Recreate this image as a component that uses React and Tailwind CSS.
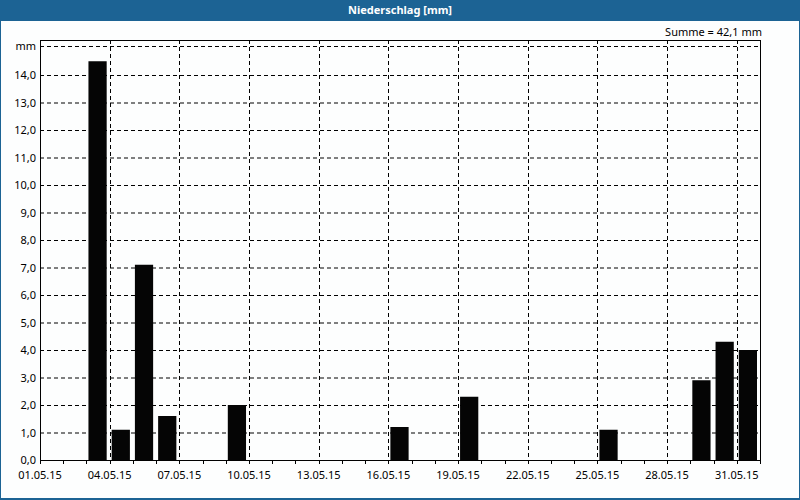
export default function App() {
  const day = 720 / 31;
  const X = (d) => 40 + d * day;
  const Y = (v) => 460 - v * 27.5;
  const bars = { 3: 14.5, 4: 1.1, 5: 7.1, 6: 1.6, 9: 2.0, 16: 1.2, 19: 2.3, 25: 1.1, 29: 2.9, 30: 4.3, 31: 4.0 };
  return (
    <div className="w-[800px] h-[500px] flex flex-col bg-[#1c6394] font-['DejaVu_Sans',sans-serif]">
      <div className="h-[21px] flex items-center justify-center text-white text-[11px] font-bold">
        Niederschlag [mm]
      </div>
      <div className="mx-[1px] mb-[2px] flex-1 bg-[#fdfefe]">
        <svg width="798" height="477" viewBox="1 21 798 477" className="text-[11px]">
          <text x="762" y="36" textAnchor="end" fill="#000">Summe = 42,1 mm</text>
          {Array.from({ length: 15 }, (_, i) => i).map((i) => (
            <g key={i}>
              {i > 0 && <line x1="40" x2="760" y1={Y(i) + 0.5} y2={Y(i) + 0.5} stroke="#000" strokeDasharray="4 3" />}
              <text x="36" y={Y(i) + 4} textAnchor="end">{i.toFixed(1).replace('.', ',')}</text>
            </g>
          ))}
          <line x1="40" x2="760" y1="46.5" y2="46.5" stroke="#000" strokeDasharray="4 3" />
          <text x="36" y="50" textAnchor="end">mm</text>
          {Array.from({ length: 11 }, (_, i) => i * 3).map((d) => (
            <g key={d}>
              {d > 0 && <line x1={Math.round(X(d)) + 0.5} x2={Math.round(X(d)) + 0.5} y1="40" y2="460" stroke="#000" strokeDasharray="4 3" />}
              <text x={X(d)} y="479" textAnchor="middle">{String(d + 1).padStart(2, '0')}.05.15</text>
            </g>
          ))}
          {Array.from({ length: 32 }, (_, d) => (
            <line key={d} x1={Math.round(X(d)) + 0.5} x2={Math.round(X(d)) + 0.5} y1="460" y2="464" stroke="#000" />
          ))}
          {Object.entries(bars).map(([d, v]) => {
            const x0 = X(d - 1) + 2;
            return <rect key={d} x={x0} y={Y(v)} width={day - 5} height={460 - Y(v)} fill="#050505" />;
          })}
          <rect x="40.5" y="40.5" width="720" height="420" fill="none" stroke="#000" />
        </svg>
      </div>
    </div>
  );
}
